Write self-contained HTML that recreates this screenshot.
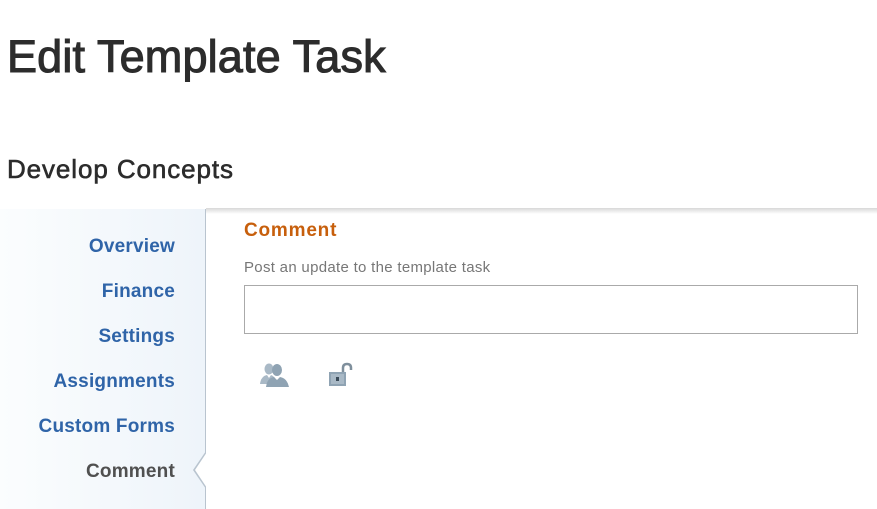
<!DOCTYPE html>
<html><head><meta charset="utf-8"><style>
*{margin:0;padding:0;box-sizing:border-box}
body{width:877px;height:509px;overflow:hidden;background:#fff;font-family:"Liberation Sans",sans-serif;position:relative;color:#2c2c2c}
h1{position:absolute;left:7px;top:31px;font-size:45px;font-weight:normal;letter-spacing:0.15px;color:#2c2c2c;-webkit-text-stroke:1.1px #2c2c2c}
h2{position:absolute;left:7px;top:154px;font-size:26px;font-weight:normal;letter-spacing:0.9px;color:#2c2c2c;-webkit-text-stroke:0.6px #2c2c2c}
.side{position:absolute;left:0;top:209px;width:206px;height:300px;background:linear-gradient(90deg,#fbfdfe,#eef4fa);border-right:1px solid #b9c4cf}
.shadow{position:absolute;left:206px;top:208px;width:671px;height:6px;background:linear-gradient(#d8d8d8,#fff)}
.nav{position:absolute;right:702px;font-size:19px;font-weight:bold;color:#2f64a8;text-align:right;white-space:nowrap;letter-spacing:0.2px}
.arrow{position:absolute;left:193px;top:451px;width:0;height:0;border-top:19px solid transparent;border-bottom:19px solid transparent;border-right:13px solid #b9c4cf}
.arrow2{position:absolute;left:195px;top:452px;width:0;height:0;border-top:18px solid transparent;border-bottom:18px solid transparent;border-right:12px solid #fff}
.ct{position:absolute;left:244px;top:220px;font-size:19px;font-weight:bold;color:#c75f0c;letter-spacing:0.8px}
.lbl{position:absolute;left:244px;top:259px;font-size:15px;color:#777;letter-spacing:0.3px}
.box{position:absolute;left:244px;top:285px;width:614px;height:49px;border:1px solid #aaa}
</style></head><body>
<h1>Edit Template Task</h1>
<h2>Develop Concepts</h2>
<div class="side"></div>
<div class="shadow"></div>
<div class="nav" style="top:236px">Overview</div>
<div class="nav" style="top:281px">Finance</div>
<div class="nav" style="top:326px">Settings</div>
<div class="nav" style="top:371px">Assignments</div>
<div class="nav" style="top:416px">Custom Forms</div>
<div class="nav" style="top:461px;color:#505050">Comment</div>
<div class="arrow"></div><div class="arrow2"></div>
<div class="ct">Comment</div>
<div class="lbl">Post an update to the template task</div>
<div class="box"></div>
<svg style="position:absolute;left:259px;top:362px" width="32" height="26" viewBox="0 0 32 26">
<ellipse cx="10" cy="7" rx="4.5" ry="5.5" fill="#a9b9c6"/><path d="M1 22 Q2 14 8 13 L10 16 L12 13 Q16 14 17 20 L17 22Z" fill="#a9b9c6"/>
<ellipse cx="18" cy="8" rx="5" ry="6" fill="#8fa3b3"/><path d="M7 25 Q8 16 15 15 L18 18 L21 15 Q28 16 30 25Z" fill="#8fa3b3"/>
</svg>
<svg style="position:absolute;left:326px;top:361px" width="28" height="26" viewBox="0 0 28 26">
<path d="M17 12 V7 Q17 3 21 3 Q25 3 25 7 V9" fill="none" stroke="#7f8f9c" stroke-width="2.5"/>
<rect x="3" y="11" width="17" height="14" fill="#8fa3b3"/><rect x="5" y="13" width="13" height="10" fill="#a9b9c6"/>
<rect x="10" y="16" width="3" height="4" fill="#3a4a58"/>
</svg>
</body></html>
